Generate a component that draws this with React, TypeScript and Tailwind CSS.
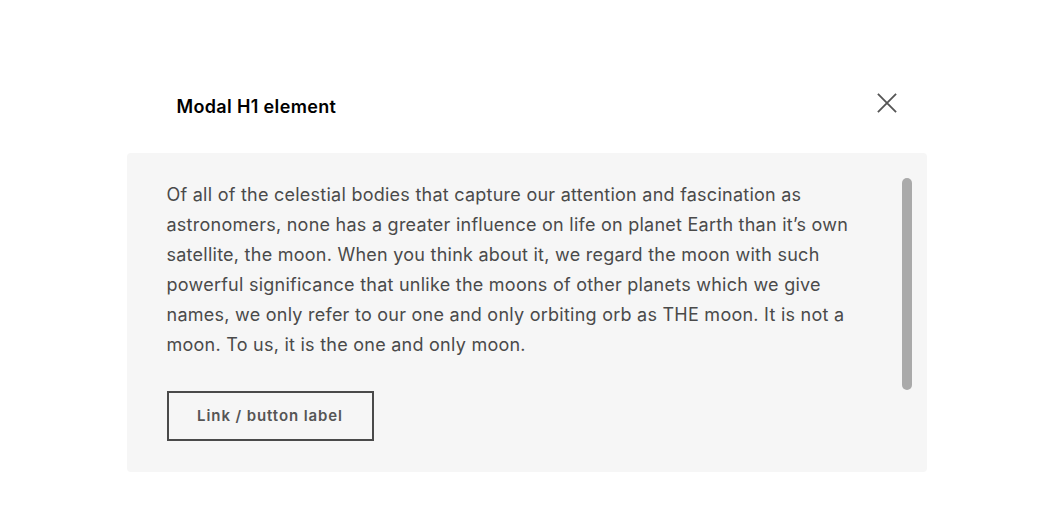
export default function App() {
  return (
    <div className="w-[1053px] h-[527px] bg-white flex items-start justify-center pt-[80px]" style={{ fontFamily: "Inter, 'Open Sans', sans-serif" }}>
      <div className="w-[800px] flex flex-col">
        <div className="flex items-center justify-between h-[73px] pl-[50px] pr-[30px] pb-[20px]">
          <h1 className="text-[18px] font-semibold tracking-[0.35px] text-black">Modal H1 element</h1>
          <button className="w-[20px] h-[20px] flex items-center justify-center -mt-[7px]">
            <svg width="22" height="22" viewBox="0 0 22 22" fill="none" stroke="#555" strokeWidth="2">
              <path d="M1 1L21 21M21 1L1 21" />
            </svg>
          </button>
        </div>
        <div className="bg-[#f6f6f6] rounded-[4px] flex h-[319px]">
          <div className="flex-1 min-w-0 pl-[40px] pt-[27px] pb-[32px] pr-[35px]">
            <p className="text-[18px] leading-[30px] tracking-[0.25px] text-[#4a4a4a]">
              Of all of the celestial bodies that capture our attention and fascination as astronomers, none has a greater influence on life on planet Earth than it’s own satellite, the moon. When you think about it, we regard the moon with such powerful significance that unlike the moons of other planets which we give names, we only refer to our one and only orbiting orb as THE moon. It is not a moon. To us, it is the one and only moon.
            </p>
            <button className="mt-[31px] w-[207px] h-[50px] border-2 border-[#4a4a4a] text-[15px] font-semibold tracking-[0.9px] text-[#555]">
              Link / button label
            </button>
          </div>
          <div className="w-[25px] shrink-0 pt-[25px] pr-[15px]">
            <div className="w-[10px] h-[212px] rounded-full bg-[#aaaaaa]" />
          </div>
        </div>
      </div>
    </div>
  );
}
